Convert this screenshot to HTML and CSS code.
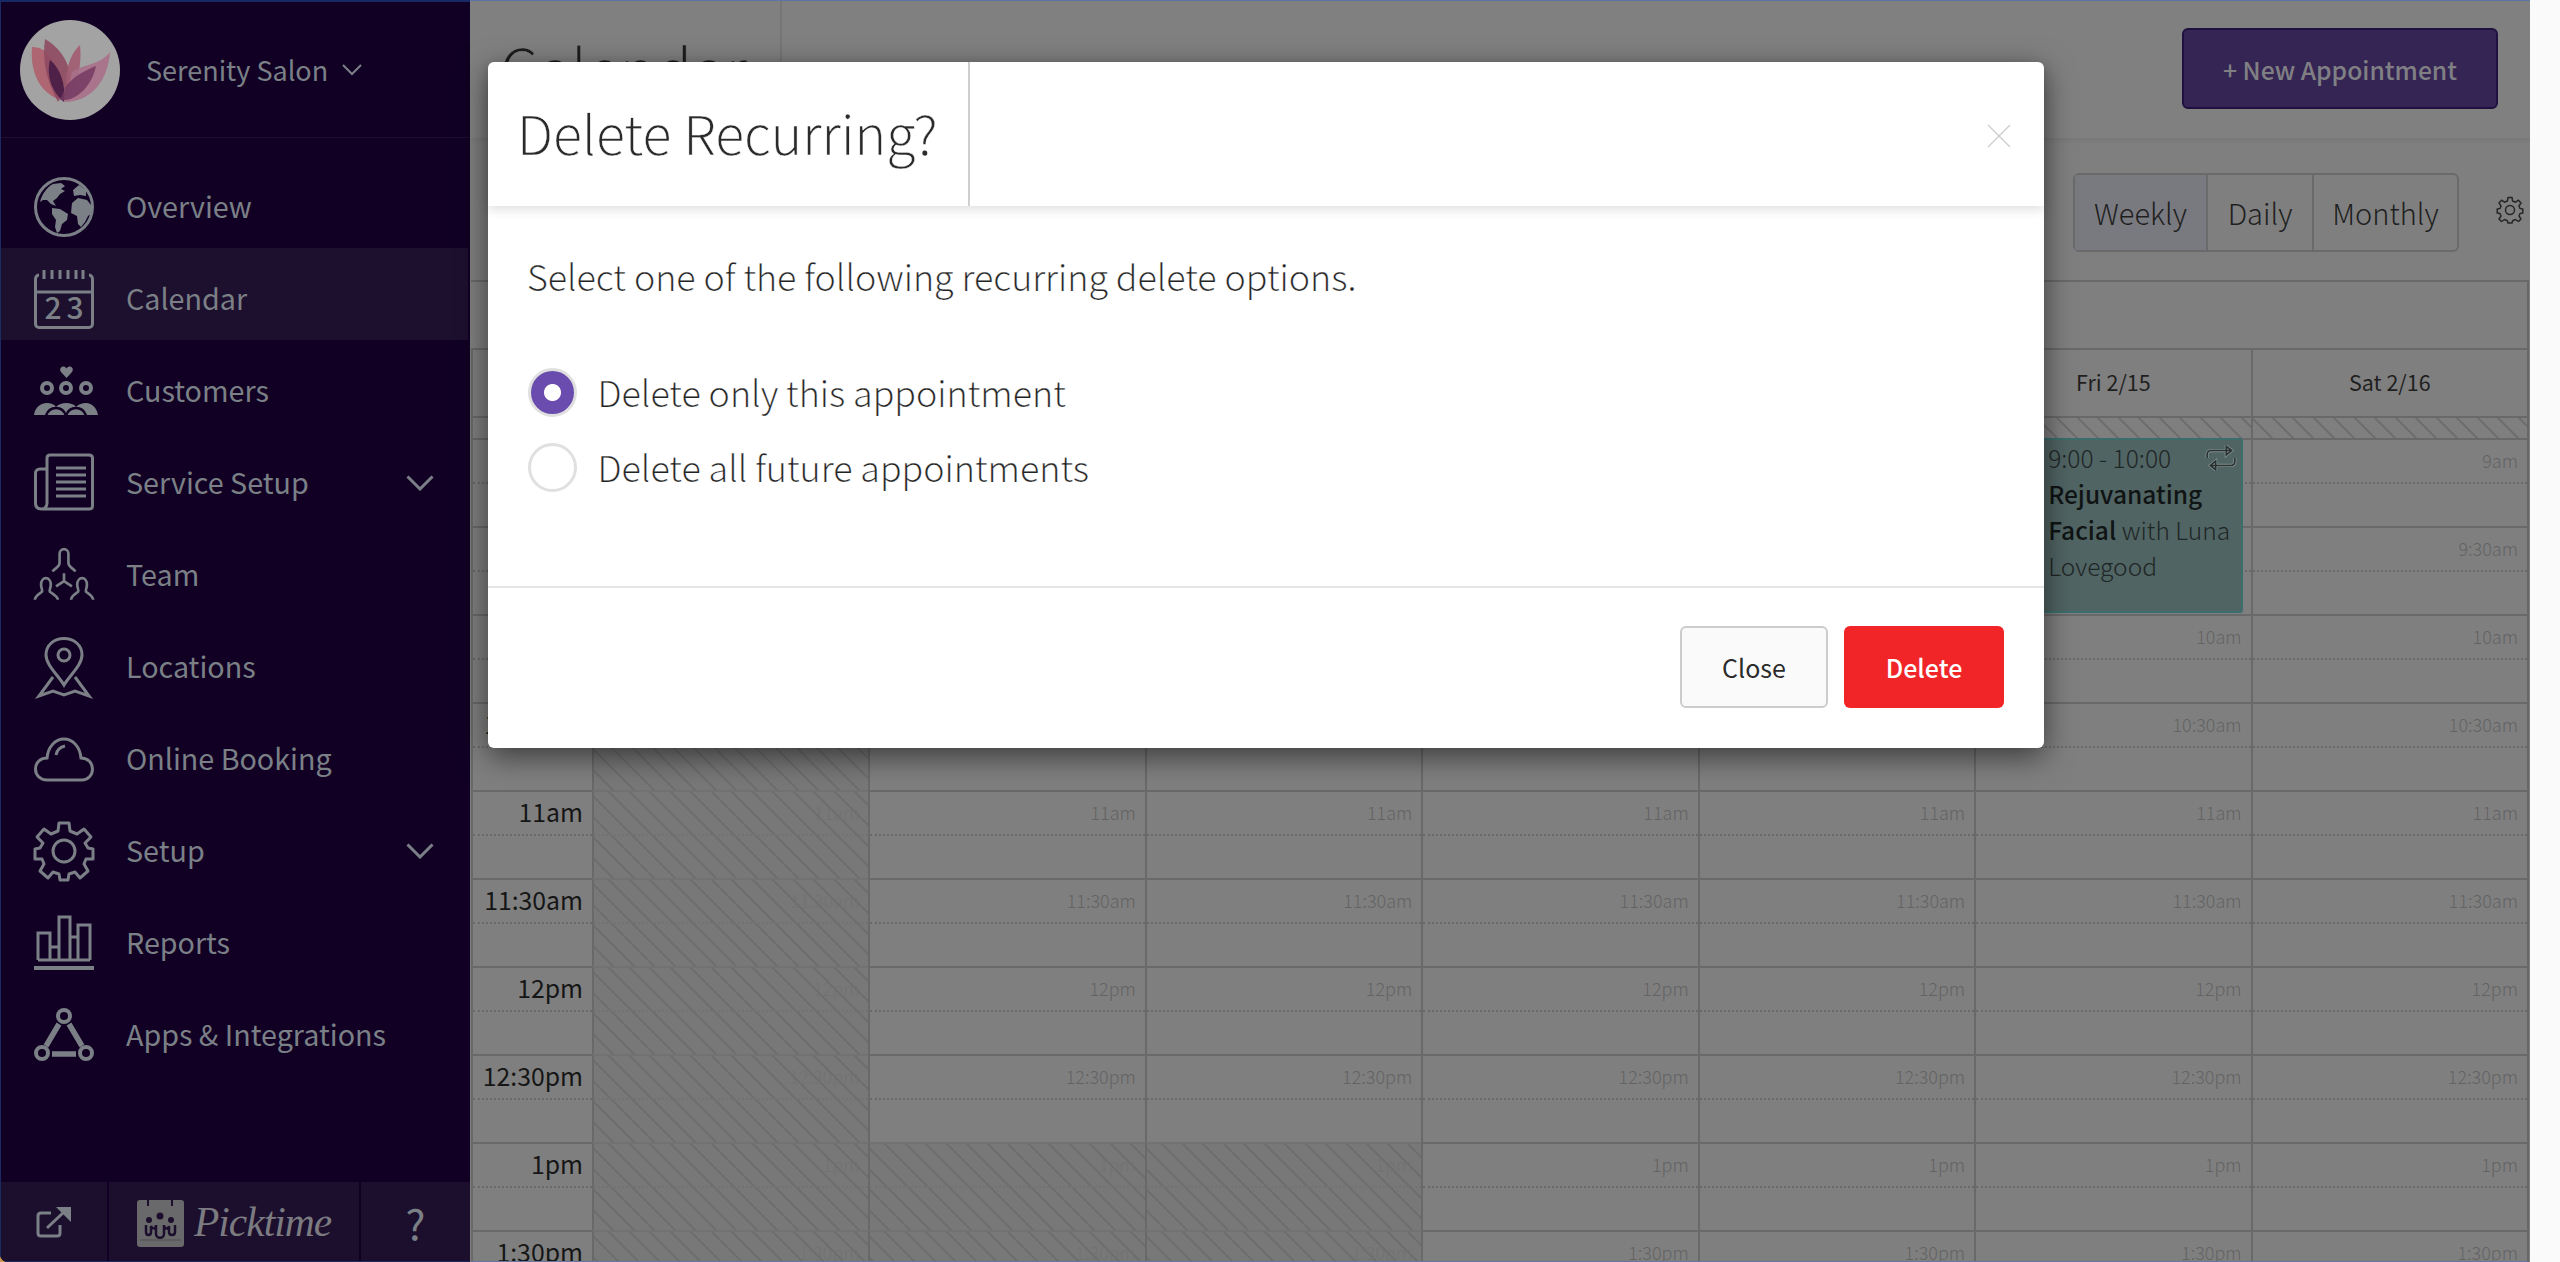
FILE: index.html
```html
<!DOCTYPE html>
<html lang="en">
<head>
<meta charset="utf-8">
<title>Calendar</title>
<link rel="stylesheet" href="styles.css">
</head>
<body>
<div class="app">
  <aside class="sidebar">
    <header class="brand">
      <svg class="brand-logo" viewBox="0 0 100 100">
        <circle cx="50" cy="50" r="50" fill="#a3a3a3"/>
        <path d="M12 27C30 27 36 42 40 80C18 72 10 50 12 27Z" fill="#ae6672"/>
        <path d="M25 19C40 28 50 42 50 60L38 82C26 60 22 40 25 19Z" fill="#8e4a62" opacity=".9"/>
        <path d="M60 25C52 32 46 46 46 62L44 80C58 66 62 46 60 25Z" fill="#a25c72" opacity=".9"/>
        <path d="M90 32C80 45 64 44 52 52C50 66 46 76 44 82C72 82 88 60 90 32Z" fill="#a9708a" opacity=".9"/>
        <path d="M30 40C40 48 46 64 44 82C32 72 26 56 30 40Z" fill="#4f2048"/>
        <path d="M76 46C66 50 54 56 46 66L40 80C56 82 72 66 76 46Z" fill="#743a60" opacity=".85"/>
      </svg>
      <span class="brand-name">Serenity Salon</span>
      <svg class="brand-chevron" viewBox="0 0 20 12"><path d="M1 1l9 9 9-9"/></svg>
    </header>
    <nav class="nav">
      <a class="nav-item">
        <svg class="nav-icon" viewBox="0 0 60 60"><circle class="ln" cx="30" cy="30" r="28.500"/><path class="fl" d="M6 25C8 17 13 10 19 7L27 6L31 9L27 12L31 14L26 17L23 21L19 24L22 29L17 27L13 23L9 23Z"/><path class="fl" d="M18 31L26 32L34 37L33 43L28 47L26 54L23 56L21 50L22 43L18 37Z"/><path class="fl" d="M38 26L44 21L53 23L57 28L58 36L54 39L51 45L47 50L44 47L43 39L37 36Z"/><path class="fl" d="M39 13L45 8L52 13L52 19L46 18L40 19Z"/></svg>
        <span>Overview</span>
      </a>
      <a class="nav-item is-active">
        <svg class="nav-icon" viewBox="0 0 60 60"><path class="ln" d="M5 6C3 6 1.500 8 1.500 10V55C1.500 57 3 58.500 5 58.500H55C57 58.500 58.500 57 58.500 55V10C58.500 8 57 6 55 6M1.500 23H58.500"/><path class="ln" d="M10 1V10M18 1V10M26 1V10M34 1V10M42 1V10M49 1V10"/><text class="cal-num" x="19" y="50">2</text><text class="cal-num" x="41" y="50">3</text></svg>
        <span>Calendar</span>
      </a>
      <a class="nav-item">
        <svg class="nav-icon" viewBox="0 0 60 60"><path class="fl" d="M32.500 17L27 11C25 8 27 5.500 29.500 5.500C31 5.500 32 6.500 32.500 7.500C33 6.500 34 5.500 35.500 5.500C38 5.500 40 8 38 11Z"/><circle class="ln-b" cx="13" cy="27" r="5"/><circle class="ln-b" cx="32" cy="27" r="5"/><circle class="ln-b" cx="52" cy="27" r="5"/><path class="fl" d="M0 54C1 46 7 42 13 42C17 42 20 43 22 46C25 43 28 42 32 42C36 42 40 43 42 46C45 43 48 42 52 42C58 42 63 47 64 54Z"/><path class="cut" d="M12 54.500C14 49 18 47 22 47C26 47 30 49 32 54.500C34 49 38 47 42 47C46 47 50 49 52 54.500"/></svg>
        <span>Customers</span>
      </a>
      <a class="nav-item">
        <svg class="nav-icon" viewBox="0 0 60 60"><path class="ln" d="M13 16H6C3 16 1.500 18 1.500 20V50C1.500 54 4 56 8 56H55C57 56 58.500 55 58.500 53V5C58.500 3 57 2 55 2H16C14 2 13 3 13 5V50C13 53 11 56 8 56"/><path class="ln" d="M22 15H52M22 22H52M22 29H52M22 36H52M22 43H52"/></svg>
        <span>Service Setup</span>
        <svg class="nav-chevron" viewBox="0 0 28 16"><path d="M1.500 1.500L14 14 26.500 1.500"/></svg>
      </a>
      <a class="nav-item">
        <svg class="nav-icon" viewBox="0 0 68 60"><path class="ln" d="M21 26C24 22 29 21 29 16V6C29 -1 39 -1 39 6V16C39 21 44 22 47 26"/><path class="ln" d="M1 58C1 54 5 52 9 49C10 47 8 45 8 41C8 31 19 31 19 41C19 45 17 47 18 49C22 52 27 54 27 58"/><path class="ln" d="M42 58C42 54 46 52 50 49C51 47 49 45 49 41C49 31 60 31 60 41C60 45 58 47 59 49C63 52 67 54 67 58"/><path class="ln" d="M34 28V37M34 37L25 43M34 37L43 43"/></svg>
        <span>Team</span>
      </a>
      <a class="nav-item">
        <svg class="nav-icon" viewBox="0 0 60 60"><path class="ln" d="M30 48C24 38 12 28 12 18C12 8 20 1.500 30 1.500C40 1.500 48 8 48 18C48 28 36 38 30 48Z"/><circle class="ln" cx="30" cy="18" r="6"/><path class="ln" d="M19 40L5 59L19 54L30 58L41 54L55 59L41 40"/></svg>
        <span>Locations</span>
      </a>
      <a class="nav-item">
        <svg class="nav-icon" viewBox="0 0 60 60"><path class="ln" d="M13 51C6 51 1.500 46 1.500 40C1.500 33 7 29 13 29C14 18 21 10 30 10C39 10 46 18 47 29C54 29 58.500 34 58.500 40C58.500 46 54 51 48 51Z"/><path class="ln" d="M22 26C23 21 26 18 31 17"/></svg>
        <span>Online Booking</span>
      </a>
      <a class="nav-item">
        <svg class="nav-icon" viewBox="0 0 60 60"><circle class="ln" cx="30" cy="30" r="11"/><path class="ln" stroke-linejoin="round" d="M25 2H35L36 10L43 13L50 8L57 16L51 22L54 27L59 28V38L52 38L50 43L54 50L46 57L41 51L35 53L34 59H26L25 53L19 51L14 57L6 50L10 43L8 38L1 38V28L6 27L9 22L3 16L10 8L17 13L24 10Z"/></svg>
        <span>Setup</span>
        <svg class="nav-chevron" viewBox="0 0 28 16"><path d="M1.500 1.500L14 14 26.500 1.500"/></svg>
      </a>
      <a class="nav-item">
        <svg class="nav-icon" viewBox="0 0 60 60"><path class="ln" d="M4 47V20H16V47M16 34H25M25 47V4H36V47M36 24H44M44 47V12H56V47M4 47H56"/><path class="ln-b" d="M0 55H60"/></svg>
        <span>Reports</span>
      </a>
      <a class="nav-item">
        <svg class="nav-icon" viewBox="0 0 60 60"><circle class="ln-b" cx="30" cy="11" r="6"/><circle class="ln-b" cx="8" cy="48" r="6"/><circle class="ln-b" cx="52" cy="48" r="6"/><path class="ln-c" d="M25 19L12 41M35 19L48 41M18 49H42"/></svg>
        <span>Apps &amp; Integrations</span>
      </a>
    </nav>
    <footer class="side-foot">
      <div class="foot-cell foot-link">
        <svg class="foot-ext" viewBox="0 0 36 32"><path class="ln" d="M24 19V27C24 29 23 30 21 30H5C3 30 2 29 2 27V10C2 8 3 7 5 7H15"/><path class="ln" d="M11 22L29 5"/><path class="fl" d="M20 1H35V16Z"/></svg>
      </div>
      <div class="foot-cell foot-brand">
        <svg class="foot-cal" viewBox="0 0 47 50"><rect class="fl" y="3" width="47" height="47" rx="3"/><path d="M11 0V9M35 0V9" stroke="#1c0f2e" stroke-width="2"/><path d="M3 43H44" stroke="#5c5c5e" stroke-width="2"/><circle cx="23" cy="19" r="3.500" fill="#1c0f2e"/><circle cx="12" cy="23" r="3" fill="#1c0f2e"/><circle cx="34" cy="23" r="3" fill="#1c0f2e"/><path d="M9 28V35C9 39 14 39 14 35V29C16 33 19 32 19 28V37C19 42 27 42 27 37V28C27 32 31 33 32 29V35C32 39 38 39 38 35V28" fill="none" stroke="#1c0f2e" stroke-width="2.500"/></svg>
        <span class="foot-name">Picktime</span>
      </div>
      <div class="foot-cell foot-help">?</div>
    </footer>
  </aside>

  <main class="main">
    <header class="topbar">
      <h1 class="page-title">Calendar</h1>
      <button class="new-btn">+ New Appointment</button>
    </header>
    <div class="toolbar">
      <div class="views">
        <span class="view is-on">Weekly</span><span class="view">Daily</span><span class="view">Monthly</span>
      </div>
      <svg class="tool-gear" viewBox="0 0 28 28"><circle cx="14" cy="14" r="4.500"/><path stroke-linejoin="round" d="M12 1.500H16L16.600 5L19.500 6.200L22.500 4.200L25 7L23 10L24 12.500L26.800 13V17L24 17.500L23 20L25 23L22.500 25.500L19.500 23.500L16.600 24.700L16 27H12L11.400 24.700L8.500 23.500L5.500 25.500L3 23L5 20L4 17.500L1.200 17V13L4 12.500L5 10L3 7L5.500 4.200L8.500 6.200L11.400 5Z"/></svg>
    </div>
    <section class="cal">
      <div class="allday"></div>
      <div class="cal-row day-row">
        <div class="day"></div><div class="day">Sun 2/10</div><div class="day">Mon 2/11</div><div class="day">Tue 2/12</div><div class="day">Wed 2/13</div><div class="day">Thu 2/14</div><div class="day">Fri 2/15</div><div class="day">Sat 2/16</div>
      </div>
      <div class="cal-row strip-row">
        <div class="strip-blank"></div><div class="strip"></div><div class="strip"></div><div class="strip"></div><div class="strip"></div><div class="strip"></div><div class="strip"></div><div class="strip"></div>
      </div>
      <div class="cal-row">
        <div class="time"><div class="half">9am</div><div class="half"></div></div>
        <div class="slot off"><div class="half">9am</div><div class="half"></div></div>
        <div class="slot"><div class="half">9am</div><div class="half"></div></div>
        <div class="slot"><div class="half">9am</div><div class="half"></div></div>
        <div class="slot"><div class="half">9am</div><div class="half"></div></div>
        <div class="slot"><div class="half">9am</div><div class="half"></div></div>
        <div class="slot has-event"><div class="half">9am</div><div class="half"></div>
          <article class="event">
            <svg class="event-icon" viewBox="0 0 30 24"><path class="halo" d="M2 12V9C2 6 4 5 6 5H24M20 1L25 5L20 9Z"/><path class="halo" d="M28 12V15C28 18 26 19 24 19H6M10 15L5 19L10 23Z"/><path d="M2 12V9C2 6 4 5 6 5H24M20 1L25 5L20 9Z"/><path d="M28 12V15C28 18 26 19 24 19H6M10 15L5 19L10 23Z"/></svg>
            <div class="event-time">9:00 - 10:00</div>
            <div class="event-text"><strong>Rejuvanating Facial</strong> with Luna Lovegood</div>
          </article>
        </div>
        <div class="slot"><div class="half">9am</div><div class="half"></div></div>
      </div>
      <div class="cal-row">
        <div class="time"><div class="half">9:30am</div><div class="half"></div></div>
        <div class="slot off"><div class="half">9:30am</div><div class="half"></div></div>
        <div class="slot"><div class="half">9:30am</div><div class="half"></div></div>
        <div class="slot"><div class="half">9:30am</div><div class="half"></div></div>
        <div class="slot"><div class="half">9:30am</div><div class="half"></div></div>
        <div class="slot"><div class="half">9:30am</div><div class="half"></div></div>
        <div class="slot"><div class="half">9:30am</div><div class="half"></div></div>
        <div class="slot"><div class="half">9:30am</div><div class="half"></div></div>
      </div>
      <div class="cal-row">
        <div class="time"><div class="half">10am</div><div class="half"></div></div>
        <div class="slot off"><div class="half">10am</div><div class="half"></div></div>
        <div class="slot"><div class="half">10am</div><div class="half"></div></div>
        <div class="slot"><div class="half">10am</div><div class="half"></div></div>
        <div class="slot"><div class="half">10am</div><div class="half"></div></div>
        <div class="slot"><div class="half">10am</div><div class="half"></div></div>
        <div class="slot"><div class="half">10am</div><div class="half"></div></div>
        <div class="slot"><div class="half">10am</div><div class="half"></div></div>
      </div>
      <div class="cal-row">
        <div class="time"><div class="half">10:30am</div><div class="half"></div></div>
        <div class="slot off"><div class="half">10:30am</div><div class="half"></div></div>
        <div class="slot"><div class="half">10:30am</div><div class="half"></div></div>
        <div class="slot"><div class="half">10:30am</div><div class="half"></div></div>
        <div class="slot"><div class="half">10:30am</div><div class="half"></div></div>
        <div class="slot"><div class="half">10:30am</div><div class="half"></div></div>
        <div class="slot"><div class="half">10:30am</div><div class="half"></div></div>
        <div class="slot"><div class="half">10:30am</div><div class="half"></div></div>
      </div>
      <div class="cal-row">
        <div class="time"><div class="half">11am</div><div class="half"></div></div>
        <div class="slot off"><div class="half">11am</div><div class="half"></div></div>
        <div class="slot"><div class="half">11am</div><div class="half"></div></div>
        <div class="slot"><div class="half">11am</div><div class="half"></div></div>
        <div class="slot"><div class="half">11am</div><div class="half"></div></div>
        <div class="slot"><div class="half">11am</div><div class="half"></div></div>
        <div class="slot"><div class="half">11am</div><div class="half"></div></div>
        <div class="slot"><div class="half">11am</div><div class="half"></div></div>
      </div>
      <div class="cal-row">
        <div class="time"><div class="half">11:30am</div><div class="half"></div></div>
        <div class="slot off"><div class="half">11:30am</div><div class="half"></div></div>
        <div class="slot"><div class="half">11:30am</div><div class="half"></div></div>
        <div class="slot"><div class="half">11:30am</div><div class="half"></div></div>
        <div class="slot"><div class="half">11:30am</div><div class="half"></div></div>
        <div class="slot"><div class="half">11:30am</div><div class="half"></div></div>
        <div class="slot"><div class="half">11:30am</div><div class="half"></div></div>
        <div class="slot"><div class="half">11:30am</div><div class="half"></div></div>
      </div>
      <div class="cal-row">
        <div class="time"><div class="half">12pm</div><div class="half"></div></div>
        <div class="slot off"><div class="half">12pm</div><div class="half"></div></div>
        <div class="slot"><div class="half">12pm</div><div class="half"></div></div>
        <div class="slot"><div class="half">12pm</div><div class="half"></div></div>
        <div class="slot"><div class="half">12pm</div><div class="half"></div></div>
        <div class="slot"><div class="half">12pm</div><div class="half"></div></div>
        <div class="slot"><div class="half">12pm</div><div class="half"></div></div>
        <div class="slot"><div class="half">12pm</div><div class="half"></div></div>
      </div>
      <div class="cal-row">
        <div class="time"><div class="half">12:30pm</div><div class="half"></div></div>
        <div class="slot off"><div class="half">12:30pm</div><div class="half"></div></div>
        <div class="slot"><div class="half">12:30pm</div><div class="half"></div></div>
        <div class="slot"><div class="half">12:30pm</div><div class="half"></div></div>
        <div class="slot"><div class="half">12:30pm</div><div class="half"></div></div>
        <div class="slot"><div class="half">12:30pm</div><div class="half"></div></div>
        <div class="slot"><div class="half">12:30pm</div><div class="half"></div></div>
        <div class="slot"><div class="half">12:30pm</div><div class="half"></div></div>
      </div>
      <div class="cal-row">
        <div class="time"><div class="half">1pm</div><div class="half"></div></div>
        <div class="slot off"><div class="half">1pm</div><div class="half"></div></div>
        <div class="slot off"><div class="half">1pm</div><div class="half"></div></div>
        <div class="slot off"><div class="half">1pm</div><div class="half"></div></div>
        <div class="slot"><div class="half">1pm</div><div class="half"></div></div>
        <div class="slot"><div class="half">1pm</div><div class="half"></div></div>
        <div class="slot"><div class="half">1pm</div><div class="half"></div></div>
        <div class="slot"><div class="half">1pm</div><div class="half"></div></div>
      </div>
      <div class="cal-row">
        <div class="time"><div class="half">1:30pm</div><div class="half"></div></div>
        <div class="slot off"><div class="half">1:30pm</div><div class="half"></div></div>
        <div class="slot off"><div class="half">1:30pm</div><div class="half"></div></div>
        <div class="slot off"><div class="half">1:30pm</div><div class="half"></div></div>
        <div class="slot"><div class="half">1:30pm</div><div class="half"></div></div>
        <div class="slot"><div class="half">1:30pm</div><div class="half"></div></div>
        <div class="slot"><div class="half">1:30pm</div><div class="half"></div></div>
        <div class="slot"><div class="half">1:30pm</div><div class="half"></div></div>
      </div>
    </section>
  </main>

  <div class="modal" role="dialog">
    <header class="modal-head">
      <h2 class="modal-title">Delete Recurring?</h2>
      <svg class="modal-x" viewBox="0 0 24 24"><path d="M1 1L23 23M23 1L1 23"/></svg>
    </header>
    <div class="modal-body">
      <p class="modal-text">Select one of the following recurring delete options.</p>
      <div class="radio-row"><span class="radio is-on"></span><span class="radio-label">Delete only this appointment</span></div>
      <div class="radio-row"><span class="radio"></span><span class="radio-label">Delete all future appointments</span></div>
    </div>
    <footer class="modal-foot">
      <button class="btn btn-close">Close</button>
      <button class="btn btn-delete">Delete</button>
    </footer>
  </div>
</div>
<div class="gutter"></div>
</body>
</html>
```
FILE: styles.css
```css
* { box-sizing: border-box; }
html, body { margin: 0; height: 100%; overflow: hidden; }
body {
  display: flex;
  background: linear-gradient(to right, #c9964f 0, #c9964f 10px, #fafafa 10px);
  font-family: "Noto Sans CJK SC", "Source Sans Pro", "Open Sans", sans-serif;
  color: #1f1f1f;
}
h1, h2, p { margin: 0; font-weight: 300; }
button { font-family: inherit; }

.app {
  position: relative;
  flex: 0 0 2530px;
  height: 1262px;
  display: flex;
  overflow: hidden;
  background: #7f7f7f;
  border-bottom-left-radius: 8px;
}
.gutter { flex: 1; background: #fafafa; }

/* sidebar */
.sidebar {
  flex: 0 0 470px;
  display: flex;
  flex-direction: column;
  background: #110024;
  color: #7b8087;
  border-top: 2px solid #182a66;
  border-left: 1px solid #1c2a62;
  border-bottom: 1px solid #1c2a62;
}
.brand {
  flex: 0 0 136px;
  display: flex;
  align-items: center;
  padding-left: 19px;
  border-bottom: 1px solid #1c0f2e;
}
.brand-logo { width: 100px; height: 100px; flex: none; }
.brand-name { margin-left: 26px; font-size: 27px; }
.brand-chevron { width: 20px; height: 12px; margin-left: 14px; fill: none; stroke: #7b8087; stroke-width: 2; }
.nav { flex: 1; padding-top: 18px; }
.nav-item {
  display: flex;
  align-items: center;
  height: 92px;
  padding: 9px 0 0 33px;
  font-size: 28.700px;
}
.nav-item.is-active { background: #1d0f2e; margin-right: 2px; }
.nav-item > span { flex: 1; margin-bottom: 3px; }
.nav-icon { flex: none; width: 60px; height: 60px; margin-right: 32px; overflow: visible; }
.nav-chevron { flex: none; width: 28px; height: 16px; margin-right: 36px; fill: none; stroke: #7b8087; stroke-width: 3; }
.ln { fill: none; stroke: #7b8087; stroke-width: 3; }
.ln-b { fill: none; stroke: #7b8087; stroke-width: 4; }
.ln-c { fill: none; stroke: #7b8087; stroke-width: 5.500; }
.fl { fill: #7b8087; }
.cut { fill: none; stroke: #110024; stroke-width: 2.500; }
.cal-num { font-size: 30px; font-weight: 500; fill: #7b8087; text-anchor: middle; }

.side-foot {
  flex: 0 0 79px;
  display: flex;
  background: #1c0f2e;
}
.foot-cell { display: flex; align-items: center; justify-content: center; }
.foot-link { flex: 0 0 108px; border-right: 2px solid #110024; }
.foot-brand { flex: 0 0 252px; border-right: 2px solid #110024; gap: 10px; }
.foot-help { flex: 1; font-size: 42px; }
.foot-ext { width: 36px; height: 32px; }
.foot-cal { width: 47px; height: 50px; }
.foot-cal .fl { fill: #69696b; }
.foot-name { font-family: "Liberation Serif", serif; font-style: italic; font-size: 41.500px; color: #7b7b80; letter-spacing: -1px; }

/* main */
.main { flex: 1; min-width: 0; display: flex; flex-direction: column; border-top: 1px solid #5d78a8; }
.topbar {
  flex: 0 0 137px;
  display: flex;
  align-items: center;
  justify-content: space-between;
  padding: 0 32px 0 0;
  background: #808080;
  box-shadow: 0 2px 6px rgba(0, 0, 0, .08);
}
.page-title {
  flex: 0 0 312px;
  align-self: stretch;
  padding: 22px 0 0 30px;
  font-size: 60.500px;
  color: #1c1c1c;
  border-right: 2px solid #767676;
  -webkit-text-stroke: .5px #808080;
}
.new-btn {
  width: 316px;
  height: 81px;
  margin-bottom: 2px;
  background: #352554;
  border: 2px solid #1f1040;
  border-radius: 6px;
  color: #808084;
  font-size: 24.700px;
  font-weight: 500;
}
.toolbar {
  flex: 0 0 142px;
  display: flex;
  align-items: flex-start;
  justify-content: flex-end;
  padding: 35px 6px 0 0;
}
.views {
  display: flex;
  height: 79px;
  border: 2px solid #6a6a6a;
  border-radius: 6px;
  font-size: 29px;
  font-weight: 300;
  color: #1f1f1f;
}
.view { display: flex; align-items: center; justify-content: center; width: 106px; padding-bottom: 2px; border-left: 2px solid #6a6a6a; }
.view:first-child { width: 131px; border-left: 0; background: #797a80; }
.view:last-child { width: 145px; }
.tool-gear { width: 28px; height: 28px; margin: 23px 0 0 37px; fill: none; stroke: #262626; stroke-width: 1.500; }

/* calendar */
.cal { flex: 1; margin: 0 1px; border-right: 2px solid #676767; border-bottom: 1px solid #6478a0; overflow: hidden; }
.allday { height: 68px; border-top: 2px solid #696969; }
.cal-row { display: grid; grid-template-columns: 121px repeat(7, 1fr); height: 88px; }
.cal-row.day-row { height: 68px; }
.cal-row.strip-row { height: 22px; }
.day {
  display: flex;
  align-items: center;
  justify-content: center;
  padding-bottom: 4px;
  border-top: 2px solid #696969;
  border-left: 2px solid #696969;
  font-size: 21.500px;
  color: #1f1f1f;
}
.strip, .strip-blank { border-top: 2px solid #696969; border-left: 2px solid #696969; }
.strip, .off {
  background-image: repeating-linear-gradient(45deg, transparent 0, transparent 12.500px, #6e6e6e 12.500px, #6e6e6e 14.500px);
}
.off { background-color: #787878; }
.time, .slot { position: relative; border-top: 2px solid #696969; border-left: 2px solid #696969; display: flex; flex-direction: column; }
.half { flex: 1; padding-right: 9px; text-align: right; }
.half:first-child { border-bottom: 2px dotted #696969; }
.time .half { font-size: 24.800px; line-height: 39px; color: #161616; }
.slot .half { font-size: 18px; font-weight: 300; line-height: 40px; color: #636363; }
.off { border-top-color: #727272; }
.off .half { color: #727272; }
.off .half:first-child { border-bottom-color: #727272; }
.event {
  position: absolute;
  top: -2px;
  left: 64px;
  right: 8px;
  height: 175px;
  padding: 0 6px;
  background: #506463;
  border: 2px solid #3a6e6c;
  border-radius: 3px;
  font-size: 24.500px;
  font-weight: 300;
  line-height: 36px;
  color: #1f2626;
  z-index: 1;
}
.event-icon { position: absolute; top: 5px; right: 4px; width: 32px; height: 26px; fill: none; stroke: #2a3232; stroke-width: 1.500; }
.event-icon .halo { stroke: #7f8f8f; stroke-width: 3; }
.event-text strong { font-weight: 500; color: #101414; }

/* modal */
.modal {
  position: absolute;
  left: 488px;
  top: 62px;
  width: 1556px;
  height: 686px;
  display: flex;
  flex-direction: column;
  background: #fff;
  border-radius: 6px;
  box-shadow: 0 8px 30px rgba(0, 0, 0, .55);
  z-index: 5;
}
.modal-head {
  flex: 0 0 144px;
  display: flex;
  align-items: center;
  justify-content: space-between;
  padding-right: 33px;
  box-shadow: 0 4px 10px rgba(0, 0, 0, .12);
  position: relative;
}
.modal-title {
  align-self: stretch;
  display: flex;
  align-items: center;
  padding: 0 30px 6px 29px;
  font-size: 53.600px;
  color: #2b2b2b;
  border-right: 2px solid #cfcfcf;
  -webkit-text-stroke: .4px #fff;
}
.modal-x { width: 24px; height: 24px; margin-top: 3px; fill: none; stroke: #cdcdcd; stroke-width: 1.300; }
.modal-body { flex: 1; padding: 41px 40px 0; color: #222; font-size: 35.850px; font-weight: 300; }
.modal-text { margin: 0 0 52px -1px; line-height: 56px; -webkit-text-stroke: .25px #fff; }
.radio-row { display: flex; align-items: center; gap: 20.500px; height: 75px; }
.radio-label { padding-bottom: 3px; -webkit-text-stroke: .25px #fff; }
.radio { flex: none; width: 49px; height: 49px; border: 3px solid #e0e0e0; border-radius: 50%; background: #fff; }
.radio.is-on { background: radial-gradient(circle, #fff 0, #fff 8px, #6a4cae 9px); }
.modal-foot {
  flex: 0 0 162px;
  display: flex;
  justify-content: flex-end;
  align-items: flex-start;
  gap: 16px;
  padding: 38px 40px 0 0;
  border-top: 2px solid #e5e5e5;
}
.btn { height: 82px; border-radius: 6px; font-size: 25px; }
.btn-close { width: 148px; background: #fafafa; border: 2px solid #cccccc; color: #2b2b2b; }
.btn-delete { width: 160px; background: #f12528; border: 0; color: #fff; font-weight: 500; }
```
